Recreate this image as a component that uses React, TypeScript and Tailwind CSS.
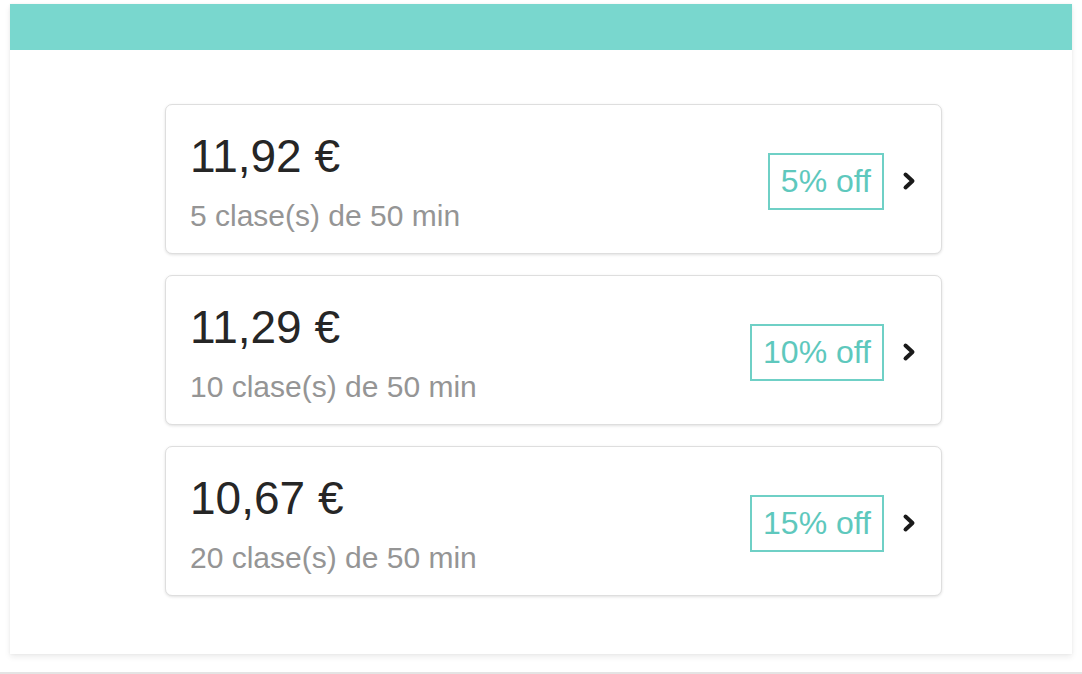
import { FC } from "react";

type Plan = {
  price: string;
  label: string;
  discount: string;
};

const plans: Plan[] = [
  { price: "11,92 €", label: "5 clase(s) de 50 min", discount: "5% off" },
  { price: "11,29 €", label: "10 clase(s) de 50 min", discount: "10% off" },
  { price: "10,67 €", label: "20 clase(s) de 50 min", discount: "15% off" },
];

const Chevron: FC = () => (
  <svg width="14" height="20" viewBox="0 0 14 20" fill="none">
    <polyline
      points="3.5,3.5 10.5,10 3.5,16.5"
      stroke="#1a1a1a"
      strokeWidth="4"
      strokeLinecap="round"
      strokeLinejoin="round"
    />
  </svg>
);

const PlanCard: FC<{ plan: Plan }> = ({ plan }) => (
  <div className="flex h-[150px] items-start justify-between rounded-[7px] border border-[#dedede] bg-white shadow-[0_1px_3px_rgba(0,0,0,0.12)]">
    {/* Price + description */}
    <div className="flex flex-col pl-[24px] pt-[28px]">
      <span className="text-[46px] leading-none text-[#262626]">{plan.price}</span>
      <span className="mt-[22px] text-[30px] leading-none text-[#959595]">{plan.label}</span>
    </div>

    {/* Discount badge + arrow */}
    <div className="flex items-center gap-[18px] self-center pr-[25px] pt-[4px]">
      <span className="flex h-[57px] items-center border-2 border-[#6fd0c6] px-[11px] text-[32px] leading-none text-[#5ec8bd]">
        {plan.discount}
      </span>
      <Chevron />
    </div>
  </div>
);

const App: FC = () => {
  return (
    <div
      className="flex h-[674px] w-[1082px] flex-col border-b-2 border-[#e4e4e4] bg-white"
      style={{ fontFamily: '"Liberation Sans", Arial, sans-serif' }}
    >
      <div className="mx-[10px] mt-[4px] h-[650px] bg-white shadow-[0_3px_6px_rgba(0,0,0,0.08),0_0_2px_rgba(0,0,0,0.06)]">
        {/* Header bar */}
        <div className="h-[46px] bg-[#79d7ce]" />

        {/* Plans */}
        <div className="ml-[155px] mt-[54px] flex w-[777px] flex-col gap-[21px]">
          {plans.map((p) => (
            <PlanCard key={p.price} plan={p} />
          ))}
        </div>
      </div>
    </div>
  );
};

export default App;
